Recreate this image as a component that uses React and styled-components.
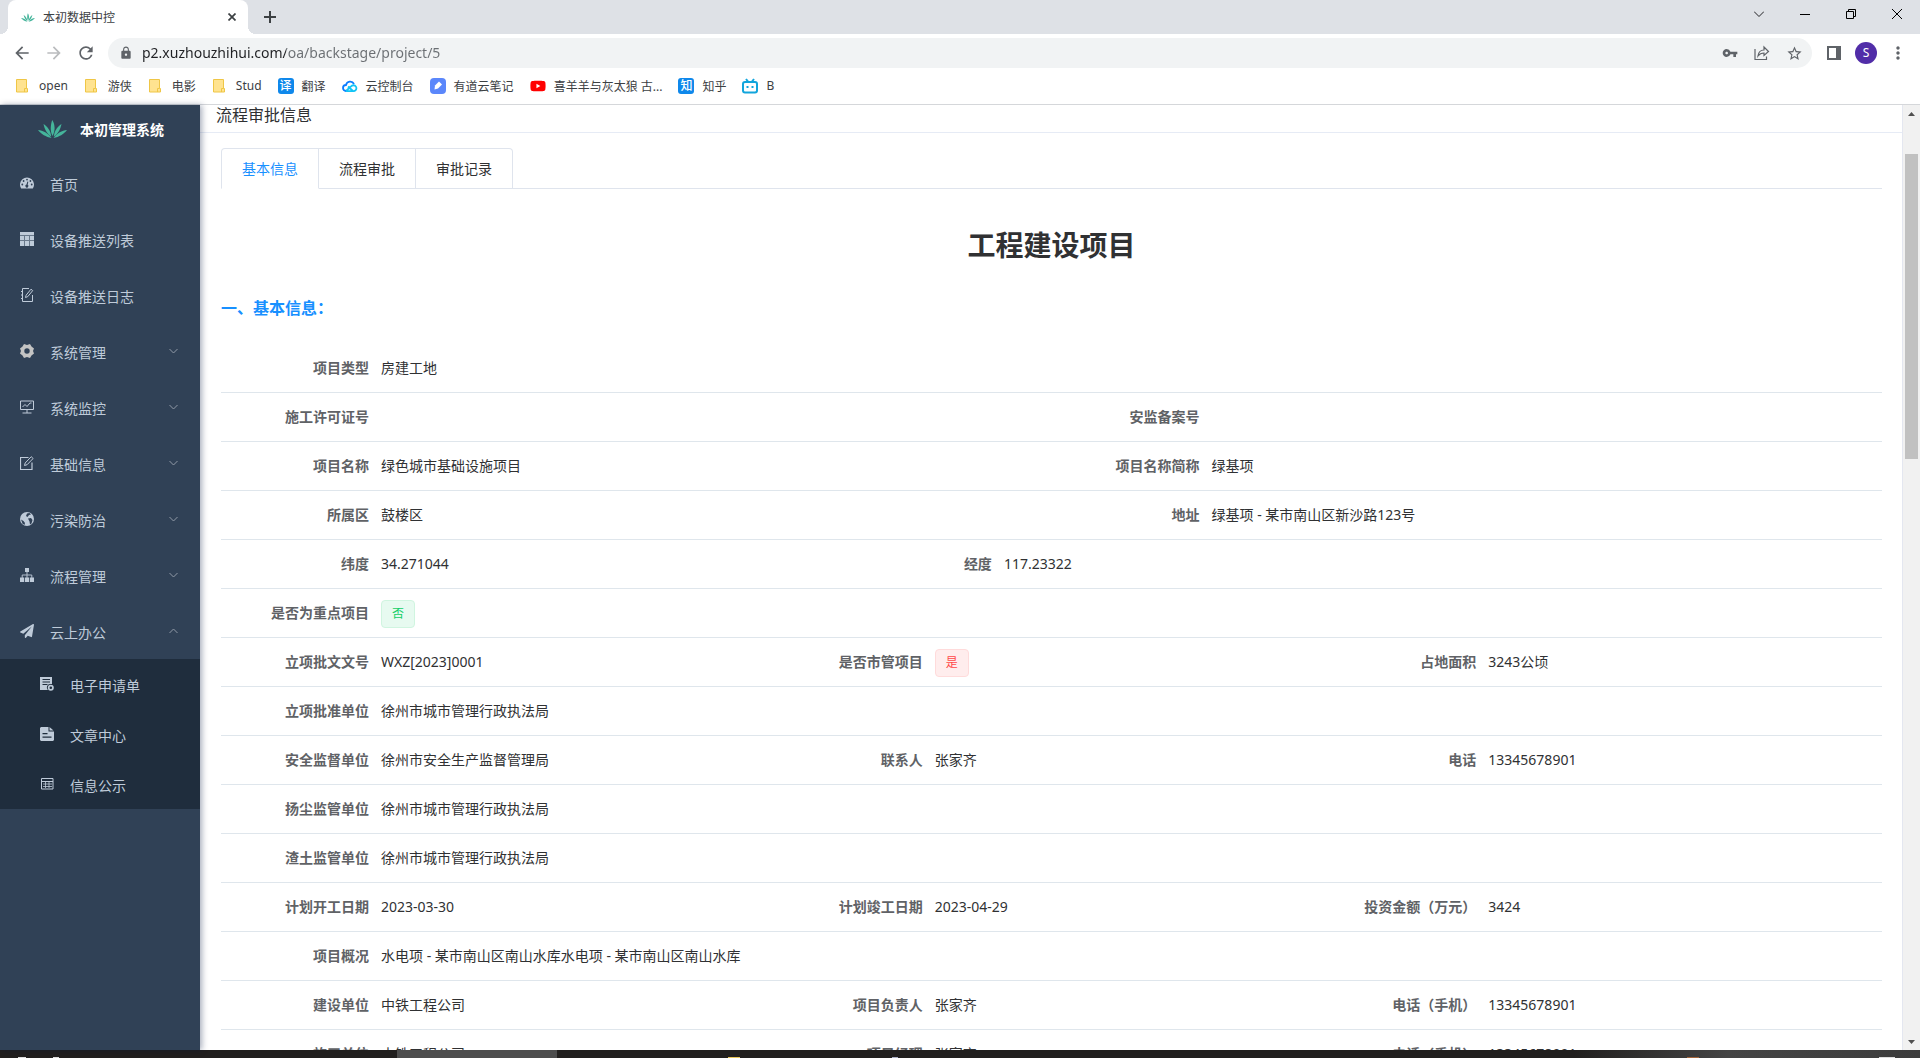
import React, { useState } from 'react';
import styled, { createGlobalStyle } from 'styled-components';
import { FaPaperPlane, FaYoutube } from 'react-icons/fa';
import { MdArrowBack, MdArrowForward, MdRefresh, MdLock, MdVpnKey, MdStarBorder, MdMoreVert } from 'react-icons/md';

const GlobalStyle = createGlobalStyle`
    * {
        box-sizing: border-box;
    }
    html, body, #root {
        height: 100%;
        margin: 0;
    }
    body, button, input {
        font-family: 'Noto Sans', 'Noto Sans CJK SC', sans-serif;
    }
    button {
        padding: 0;
        border: none;
        background: transparent;
        color: inherit;
    }
    a {
        color: inherit;
        text-decoration: none;
    }
    h1, h2, h3, dl, dd, ul {
        margin: 0;
        padding: 0;
    }
    svg {
        display: block;
        flex: none;
    }
`;

const Desktop = styled.div`
    display: flex;
    flex-direction: column;
    height: 100vh;
    overflow: hidden;
    background: #fff;
`;

const TabStrip = styled.header`
    display: flex;
    align-items: flex-end;
    height: 34px;
    background: #dee1e6;
`;

const TabFoot = styled.span`
    width: 8px;
    height: 8px;
    background: radial-gradient(circle at ${({ $side }) => $side} 0, transparent 8px, #fff 8px);
`;

const BrowserTab = styled.div`
    display: flex;
    align-items: center;
    gap: 8px;
    width: 240px;
    height: 34px;
    padding: 0 8px 0 13px;
    border-radius: 8px 8px 0 0;
    background: #fff;
    color: #3c4043;
    font-size: 12px;
    span {
        flex: 1;
    }
`;

const IconButton = styled.button`
    display: flex;
    align-items: center;
    justify-content: center;
    width: ${({ $width }) => $width || 32}px;
    height: ${({ $height }) => $height || 32}px;
    color: ${({ $color }) => $color || '#5f6368'};
`;

const WindowButtons = styled.div`
    display: flex;
    align-self: flex-start;
    margin-left: auto;
`;

const Toolbar = styled.div`
    display: flex;
    align-items: center;
    height: 38px;
    padding: 0 6px;
`;

const Omnibox = styled.div`
    display: flex;
    flex: 1;
    align-items: center;
    height: 30px;
    margin: 0 6px;
    padding: 0 2px 0 11px;
    border-radius: 15px;
    background: #f1f3f4;
    color: #5f6368;
`;

/* host is dark, path is grey */
const UrlInput = styled.input`
    flex: 1;
    min-width: 0;
    height: 28px;
    margin-left: 9px;
    padding: 0 0 2px;
    border: none;
    outline: none;
    background: linear-gradient(90deg, #202124 144px, #6b6f73 144px);
    background-clip: text;
    -webkit-text-fill-color: transparent;
    font-size: 14px;
`;

const Avatar = styled.button`
    width: 22px;
    height: 22px;
    margin: 0 5px;
    border-radius: 50%;
    background: #512da8;
    color: #fff;
    font-size: 12px;
    line-height: 22px;
`;

const Bookmarks = styled.nav`
    display: flex;
    gap: 16px;
    height: 33px;
    padding: 0 15px 5px;
    border-bottom: 1px solid #d5d7da;
    color: #3c4043;
    font-size: 12px;
    a {
        display: flex;
        align-items: center;
        gap: 8px;
    }
`;

const Badge = styled.span`
    width: 16px;
    height: 16px;
    border-radius: 3px;
    background: #0f88eb;
    color: #fff;
    font-size: 12px;
    font-weight: 500;
    line-height: 15px;
    text-align: center;
`;

const Viewport = styled.div`
    display: flex;
    flex: 1;
    min-height: 0;
`;

const Sidebar = styled.aside`
    z-index: 1;
    flex: none;
    width: 200px;
    background: #304156;
    box-shadow: 2px 0 6px rgba(0, 21, 61, 0.35);
    color: #bfcbd9;
    font-size: 14px;
    ul {
        list-style: none;
    }
`;

const Logo = styled.a`
    display: flex;
    align-items: center;
    gap: 13px;
    height: 50px;
    padding: 0 0 2px 38px;
    h1 {
        color: #fff;
        font-size: 14px;
    }
`;

const MenuLink = styled.a`
    display: flex;
    align-items: center;
    gap: 16px;
    height: ${({ $sub }) => ($sub ? 50 : 56)}px;
    padding: 0 22px 0 ${({ $sub }) => ($sub ? 40 : 20)}px;
    span {
        flex: 1;
        padding-top: 2px;
    }
`;

const SubMenu = styled.ul`
    background: #1f2d3d;
`;

const Content = styled.main`
    flex: 1;
    min-width: 0;
    overflow: hidden;
    border-right: 1px solid #e4e7f0;
    background: #fff;
    color: #303133;
    font-size: 14px;
`;

const CardHeader = styled.div`
    padding: 0 16px 7px;
    border-bottom: 1px solid #e6ebf5;
    font-size: 16px;
    line-height: 20px;
`;

const CardBody = styled.div`
    padding: 15px 20px 0 21px;
`;

const Tabs = styled.div`
    display: flex;
    border-bottom: 1px solid #dfe4ed;
`;

const TabButton = styled.button`
    height: 41px;
    margin-bottom: -1px;
    padding: 0 20px 2px;
    border: 1px solid #dfe4ed;
    border-left-width: ${({ $first }) => ($first ? 1 : 0)}px;
    border-bottom-color: ${({ $active }) => ($active ? '#fff' : '#dfe4ed')};
    border-radius: ${({ $first, $last }) => `${$first ? 4 : 0}px ${$last ? 4 : 0}px 0 0`};
    color: ${({ $active }) => ($active ? '#1890ff' : '#303133')};
    font-size: 14px;
`;

const Title = styled.h2`
    padding: 36px 0 31px;
    font-size: 28px;
    line-height: 40px;
    text-align: center;
`;

const SectionTitle = styled.h3`
    padding-bottom: 24px;
    color: #1890ff;
    font-size: 16px;
    line-height: 24px;
`;

const Row = styled.div`
    display: flex;
    height: 49px;
    border-bottom: 1px solid #dfe6ec;
`;

const Field = styled.div`
    display: flex;
    align-items: center;
    width: calc(100% * ${({ $span }) => $span} / 24);
    dt, dd {
        padding-bottom: 2px;
    }
    dt {
        width: 160px;
        padding-right: 12px;
        color: #606266;
        font-weight: 700;
        text-align: right;
    }
`;

const Tag = styled.span`
    display: block;
    width: 34px;
    height: 28px;
    margin-top: 4px;
    border: 1px solid ${({ $danger }) => ($danger ? '#ffdbdb' : '#d0f5e0')};
    border-radius: 4px;
    background: ${({ $danger }) => ($danger ? '#ffeded' : '#e7faf0')};
    color: ${({ $danger }) => ($danger ? '#ff4949' : '#13ce66')};
    font-size: 12px;
    line-height: 26px;
    text-align: center;
`;

const ScrollBar = styled.div`
    display: flex;
    flex: none;
    flex-direction: column;
    width: 17px;
    background: #f1f1f1;
`;

const Track = styled.div`
    flex: ${({ $grow }) => $grow};
`;

const Thumb = styled(Track)`
    margin: 0 2px;
    background: #c1c1c1;
`;

const TaskBar = styled.footer`
    display: flex;
    flex: none;
    align-items: flex-end;
    height: 8px;
    background: linear-gradient(90deg, #211f1e 82%, #444 90%, #3c3c3c);
`;

const TaskMark = styled.span`
    width: ${({ $width }) => $width}px;
    height: ${({ $height }) => $height || 1}px;
    margin-left: ${({ $gap }) => $gap}px;
    background: ${({ $color }) => $color};
`;

const Leaf = ({ width, height }) => (
    <svg width={width} height={height} viewBox="0 0 29 18" fill="#45b59b">
        <path d="M14.5 16C11.5 10 13 4 14.2 0c2.6 4 3.6 10 .3 16z" />
        <path d="M13.2 16.5C9 14 6.500 9 5.500 4c4 2.500 7 6.500 7.700 12.500z" />
        <path d="M15.800 16.500C20 14 22.500 9 23.500 4c-4 2.500-7 6.500-7.700 12.500z" />
        <path d="M13.500 18C8 17 3 14 0 10c5 .5 10 3 13.500 8z" />
        <path d="M15.500 18C21 17 26 14 29 10c-5 .5-10 3-13.500 8z" />
    </svg>
);

const Svg = ({ children, ...rest }) => (
    <svg width="14" height="14" viewBox="0 0 14 14" fill="none" stroke="currentColor" {...rest}>
        {children}
    </svg>
);

const FolderIcon = () => (
    <Svg width="16" height="16" viewBox="0 0 16 16" stroke="#efc646">
        <path d="M1.500 1.500h10v9h1v3.500h-11z" fill="#ffe390" />
        <path d="M9.500 14v-3.500h2" />
    </Svg>
);

const DashboardIcon = () => (
    <Svg stroke="none" fill="currentColor">
        <path d="M1.200 12.500A7 7 0 1112.800 12.500z" />
        <g fill="#304156">
            <circle cx="7" cy="3.600" r=".9" />
            <circle cx="3.600" cy="5" r=".9" />
            <circle cx="10.400" cy="5" r=".9" />
            <circle cx="2.300" cy="8.500" r=".9" />
            <circle cx="11.700" cy="8.500" r=".9" />
            <path d="M7.400 5.500l.9.300-.6 3a1.500 1.500 0 11-1.200-.2z" />
        </g>
    </Svg>
);

const GridIcon = () => (
    <Svg stroke="none" fill="currentColor">
        <path d="M0 0h14v3H0z" />
        <path d="M0 4h4v4H0zM5 4h4v4H5zM10 4h4v4h-4zM0 9h4v5H0zM5 9h4v5H5zM10 9h4v5h-4z" />
        <path d="M0 3h14v11H0z" opacity=".4" />
    </Svg>
);

const LogIcon = () => (
    <Svg>
        <path d="M9 .5H2.500v13h10V7M1 3.500h2M1 7h2M1 10.500h2" />
        <path d="M5.500 9.500l.6-2.300L11 1.200l1.700 1.400-4.900 6z" />
    </Svg>
);

const GearIcon = () => (
    <Svg stroke="none" fill="#c4c4c4" fillRule="evenodd">
        <path d="M4 0l3 1 3-1 1.500 2.500L14 4.500 13 7l1 2.500-2.500 2L10 14l-3-1-3 1-1.500-2.500L0 9.500 1 7 0 4.500l2.500-2zM7 4.300a2.700 2.700 0 100 5.400 2.700 2.700 0 000-5.400z" />
    </Svg>
);

const MonitorIcon = () => (
    <Svg>
        <path d="M.5 1h13v8.500H.5zM7 9.500V13M2.500 13h9M2.500 7l2.500-2.500L7 6.500l3-3.500h1.500" />
    </Svg>
);

const EditIcon = () => (
    <Svg>
        <path d="M8.500 1.500h-8v12h11.500V6.500" strokeWidth="1.200" />
        <path d="M4.500 9.500L5.200 7l6-6.300 1.900 1.800-6 6.200z" />
    </Svg>
);

const GlobeIcon = () => (
    <Svg stroke="none" fill="currentColor">
        <circle cx="7" cy="7" r="7" />
        <path d="M7 1.500L9.500 1l1.500 1.500-2 .5-1.500 2L6 4z" fill="#304156" />
        <path d="M8 6.500l3-.5 1.500 2-1 3.500-1.500 1-.5-3z" fill="#304156" />
        <path d="M1 7.500l2.500 1.500 1.500 2-.5 2-2-1.500z" fill="#304156" />
    </Svg>
);

const TreeIcon = () => (
    <Svg>
        <path d="M7 4v6M2.200 10V7h9.600v3" strokeWidth=".9" />
        <path d="M5 0h4v4H5zM0 9.500h4.200V14H0zM5 9.500h4V14H5zM9.800 9.500H14V14H9.800z" fill="currentColor" stroke="none" />
    </Svg>
);

const FormIcon = () => (
    <Svg stroke="none" fill="currentColor" fillRule="evenodd">
        <path d="M0 0h12v7h-2a3.500 3.500 0 00-2.500 5.500l.5.500H0zM2.500 2v1H10V2zM2.500 4.500v1H10v-1zM2.500 7v1h5V7z" />
        <path d="M10.800 7.800a3 3 0 110 6 3 3 0 010-6zm0 1.700a1.300 1.300 0 100 2.600 1.300 1.300 0 000-2.600z" />
    </Svg>
);

const DocIcon = () => (
    <Svg stroke="none" fill="currentColor" fillRule="evenodd">
        <path d="M1 0h7.500v4.500H14V13l-1 1H1l-1-1V1zM2.500 6v1.300h5V6zM2.500 9.500v1.300h9V9.500z" />
        <path d="M9.500 0L13.500 3.500h-4z" />
    </Svg>
);

const TableIcon = () => (
    <Svg>
        <path d="M1.500 1.500h11.500v10.500h-11.500zM1.500 4.500h11.500" />
        <path d="M3 7h9M3 9.500h9M5.500 5v6M9 5v6" opacity=".8" />
    </Svg>
);

const Arrow = ({ up }) => (
    <Svg width="9" height="6" viewBox="0 0 9 6" stroke="#909aa6">
        <path d={up ? 'M.5 5l4-4 4 4' : 'M.5 1l4 4 4-4'} />
    </Svg>
);

const CloudIcon = () => (
    <Svg width="16" height="16" viewBox="0 0 16 16" strokeWidth="1.800">
        <path d="M4 13a3 3 0 010-6 4.300 4.300 0 018-1" stroke="#0a7cff" />
        <path d="M4 13l5-4.500A3 3 0 1112 13.200H4M6 8.500l5 4.500" stroke="#12c4f5" />
    </Svg>
);

const NoteIcon = () => (
    <Svg width="16" height="16" viewBox="0 0 16 16" stroke="none">
        <rect width="16" height="16" rx="4" fill="#5b87fb" />
        <path d="M4.500 11.500l.5-4L9 3.500l3 3-4 4z" fill="#fff" />
    </Svg>
);

const BiliIcon = () => (
    <Svg width="16" height="16" viewBox="0 0 16 16" stroke="#12a5dc" strokeWidth="2">
        <rect x="1" y="4" width="14" height="10.500" rx="2" />
        <path d="M4 1l2 2.500M12 1l-2 2.500M5.500 8v2M10.500 8v2" />
    </Svg>
);

const bookmarks = [
    { icon: <FolderIcon />, text: 'open' },
    { icon: <FolderIcon />, text: '游侠' },
    { icon: <FolderIcon />, text: '电影' },
    { icon: <FolderIcon />, text: 'Stud' },
    { icon: <Badge>译</Badge>, text: '翻译' },
    { icon: <CloudIcon />, text: '云控制台' },
    { icon: <NoteIcon />, text: '有道云笔记' },
    { icon: <FaYoutube size={16} color="#f00" />, text: '喜羊羊与灰太狼 古...' },
    { icon: <Badge>知</Badge>, text: '知乎' },
    { icon: <BiliIcon />, text: 'B' },
];

const menu = [
    { icon: <DashboardIcon />, text: '首页' },
    { icon: <GridIcon />, text: '设备推送列表' },
    { icon: <LogIcon />, text: '设备推送日志' },
    { icon: <GearIcon />, text: '系统管理', group: true },
    { icon: <MonitorIcon />, text: '系统监控', group: true },
    { icon: <EditIcon />, text: '基础信息', group: true },
    { icon: <GlobeIcon />, text: '污染防治', group: true },
    { icon: <TreeIcon />, text: '流程管理', group: true },
    {
        icon: <FaPaperPlane size={14} />,
        text: '云上办公',
        group: true,
        children: [
            { icon: <FormIcon />, text: '电子申请单' },
            { icon: <DocIcon />, text: '文章中心' },
            { icon: <TableIcon />, text: '信息公示' },
        ],
    },
];

const tabs = ['基本信息', '流程审批', '审批记录'];

// [label, value, span of 24]
const rows = [
    [['项目类型', '房建工地', 24]],
    [['施工许可证号', '', 12], ['安监备案号', '', 12]],
    [['项目名称', '绿色城市基础设施项目', 12], ['项目名称简称', '绿基项', 12]],
    [['所属区', '鼓楼区', 12], ['地址', '绿基项 - 某市南山区新沙路123号', 12]],
    [['纬度', '34.271044', 9], ['经度', '117.23322', 9]],
    [['是否为重点项目', <Tag>否</Tag>, 24]],
    [['立项批文文号', 'WXZ[2023]0001', 8], ['是否市管项目', <Tag $danger>是</Tag>, 8], ['占地面积', '3243公顷', 8]],
    [['立项批准单位', '徐州市城市管理行政执法局', 24]],
    [['安全监督单位', '徐州市安全生产监督管理局', 8], ['联系人', '张家齐', 8], ['电话', '13345678901', 8]],
    [['扬尘监管单位', '徐州市城市管理行政执法局', 24]],
    [['渣土监管单位', '徐州市城市管理行政执法局', 24]],
    [['计划开工日期', '2023-03-30', 8], ['计划竣工日期', '2023-04-29', 8], ['投资金额（万元）', '3424', 8]],
    [['项目概况', '水电项 - 某市南山区南山水库水电项 - 某市南山区南山水库', 24]],
    [['建设单位', '中铁工程公司', 8], ['项目负责人', '张家齐', 8], ['电话（手机）', '13345678901', 8]],
    [['施工单位', '中铁工程公司', 8], ['项目经理', '张家齐', 8], ['电话（手机）', '13345678901', 8]],
];

const Browser = () => (
    <>
        <TabStrip>
            <TabFoot $side="0" />
            <BrowserTab>
                <Leaf width={14} height={9} />
                <span>本初数据中控</span>
                <IconButton $width={16} $height={16} $color="#3c4043" aria-label="关闭标签页">
                    <Svg width="8" height="8" viewBox="0 0 8 8" strokeWidth="1.700"><path d="M.5.5l7 7M7.500.5l-7 7" /></Svg>
                </IconButton>
            </BrowserTab>
            <TabFoot $side="100%" />
            <IconButton $width={28} $height={34} $color="#3c4043" aria-label="新标签页">
                <Svg width="12" height="12" viewBox="0 0 12 12" strokeWidth="2"><path d="M6 0v12M0 6h12" /></Svg>
            </IconButton>
            <WindowButtons>
                <IconButton $width={46} $height={28} $color="#202124" aria-label="搜索标签页">
                    <Svg width="10" height="6" viewBox="0 0 10 6"><path d="M0 .5l5 5 5-5" /></Svg>
                </IconButton>
                <IconButton $width={46} $height={28} $color="#000" aria-label="最小化">
                    <Svg width="10" height="1" viewBox="0 0 10 1"><path d="M0 .5h10" /></Svg>
                </IconButton>
                <IconButton $width={46} $height={28} $color="#000" aria-label="还原">
                    <Svg width="10" height="10" viewBox="0 0 10 10"><path d="M.5 2.500h7v7h-7zM2.500 2.500v-2h7v7h-2" /></Svg>
                </IconButton>
                <IconButton $width={46} $height={28} $color="#000" aria-label="关闭">
                    <Svg width="10" height="10" viewBox="0 0 10 10"><path d="M0 0l10 10M10 0L0 10" /></Svg>
                </IconButton>
            </WindowButtons>
        </TabStrip>
        <Toolbar>
            <IconButton aria-label="后退"><MdArrowBack size={20} /></IconButton>
            <IconButton $color="#babcbe" aria-label="前进"><MdArrowForward size={20} /></IconButton>
            <IconButton aria-label="刷新"><MdRefresh size={20} /></IconButton>
            <Omnibox>
                <MdLock size={14} />
                <UrlInput aria-label="地址" defaultValue="p2.xuzhouzhihui.com/oa/backstage/project/5" />
                <IconButton aria-label="密码"><MdVpnKey size={16} /></IconButton>
                <IconButton aria-label="分享">
                    <Svg width="16" height="16" viewBox="0 0 16 16" strokeWidth="1.200">
                        <path d="M1 4v10.500h11.500v-3" />
                        <path d="M4 11c.5-4 3-6 6-6V2l4.500 4.500-4.500 4V8c-3 0-4.500 1-6 3z" />
                    </Svg>
                </IconButton>
                <IconButton aria-label="收藏"><MdStarBorder size={17} /></IconButton>
            </Omnibox>
            <IconButton aria-label="侧边栏">
                <Svg strokeWidth="2"><path d="M1 1h12v12H1z" /><path d="M11 1v12" strokeWidth="4" /></Svg>
            </IconButton>
            <Avatar>S</Avatar>
            <IconButton aria-label="菜单"><MdMoreVert size={20} /></IconButton>
        </Toolbar>
        <Bookmarks>
            {bookmarks.map(({ icon, text }) => (
                <a href="#" key={text}>{icon}{text}</a>
            ))}
        </Bookmarks>
    </>
);

const Menu = () => (
    <Sidebar>
        <Logo href="#">
            <Leaf width={29} height={18} />
            <h1>本初管理系统</h1>
        </Logo>
        <ul>
            {menu.map(({ icon, text, group, children }) => (
                <li key={text}>
                    <MenuLink href="#">
                        {icon}
                        <span>{text}</span>
                        {group && <Arrow up={Boolean(children)} />}
                    </MenuLink>
                    {children && (
                        <SubMenu>
                            {children.map((item) => (
                                <li key={item.text}>
                                    <MenuLink href="#" $sub>
                                        {item.icon}
                                        <span>{item.text}</span>
                                    </MenuLink>
                                </li>
                            ))}
                        </SubMenu>
                    )}
                </li>
            ))}
        </ul>
    </Sidebar>
);

const App = () => {
    const [active, setActive] = useState(0);

    return (
        <Desktop>
            <GlobalStyle />
            <Browser />
            <Viewport>
                <Menu />
                <Content>
                    <CardHeader>流程审批信息</CardHeader>
                    <CardBody>
                        <Tabs role="tablist">
                            {tabs.map((tab, i) => (
                                <TabButton
                                    key={tab}
                                    role="tab"
                                    aria-selected={active === i}
                                    $active={active === i}
                                    $first={i === 0}
                                    $last={i === tabs.length - 1}
                                    onClick={() => setActive(i)}
                                >
                                    {tab}
                                </TabButton>
                            ))}
                        </Tabs>
                        <Title>工程建设项目</Title>
                        <SectionTitle>一、基本信息：</SectionTitle>
                        <dl>
                            {rows.map((fields, i) => (
                                <Row key={i}>
                                    {fields.map(([label, value, span]) => (
                                        <Field key={label} $span={span}>
                                            <dt>{label}</dt>
                                            <dd>{value}</dd>
                                        </Field>
                                    ))}
                                </Row>
                            ))}
                        </dl>
                    </CardBody>
                </Content>
                <ScrollBar>
                    <IconButton $width={17} $height={17} $color="#505050" aria-label="向上滚动">
                        <Svg width="7" height="4" viewBox="0 0 7 4" stroke="none" fill="currentColor"><path d="M0 4l3.500-4L7 4z" /></Svg>
                    </IconButton>
                    <Track $grow={32} />
                    <Thumb $grow={305} />
                    <Track $grow={574} />
                    <IconButton $width={17} $height={17} $color="#505050" aria-label="向下滚动">
                        <Svg width="7" height="4" viewBox="0 0 7 4" stroke="none" fill="currentColor"><path d="M0 0l3.500 4L7 0z" /></Svg>
                    </IconButton>
                </ScrollBar>
            </Viewport>
            <TaskBar>
                <TaskMark $gap={18} $width={8} $color="#ddd" />
                <TaskMark $gap={27} $width={6} $color="#ddd" />
                <TaskMark $gap={338} $width={160} $height={8} $color="#4d4d4d" />
                <TaskMark $gap={171} $width={12} $color="#e8c558" />
                <TaskMark $gap={152} $width={6} $color="#a9adc4" />
                <TaskMark $gap={789} $width={12} $color="#a3643a" />
                <TaskMark $gap={180} $width={16} $color="#ddd" />
            </TaskBar>
        </Desktop>
    );
};

export default App;
